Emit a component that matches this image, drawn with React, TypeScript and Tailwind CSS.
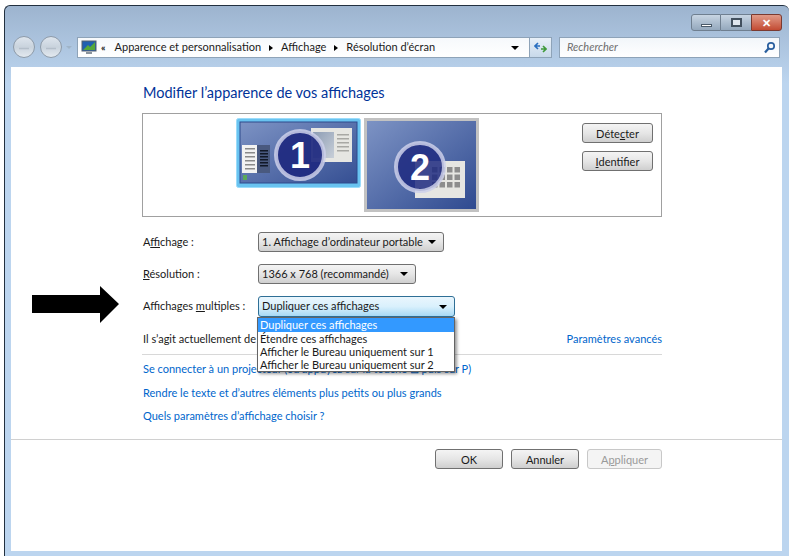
const btn =
  "h-[20px] rounded-[3px] border border-[#707070] bg-gradient-to-b from-[#f4f4f4] via-[#e6e6e6] to-[#cfcfcf] text-[11px] leading-none text-[#1a1a1a] flex items-center justify-center";
const select =
  "h-[20px] rounded-[3px] border border-[#707070] bg-gradient-to-b from-[#f4f4f4] via-[#e6e6e6] to-[#cfcfcf] text-[11px] flex items-center justify-between pl-[3px] pr-[7px] text-[#1a1a1a] whitespace-nowrap";

function Caret() {
  return <span className="block shrink-0 w-0 h-0 border-x-[4px] border-x-transparent border-t-[4px] border-t-black" />;
}

function NavCircle() {
  return (
    <svg width="22" height="22" viewBox="0 0 22 22" className="shrink-0">
      <defs>
        <linearGradient id="nav" x1="0" y1="0" x2="0" y2="1">
          <stop offset="0" stopColor="#dfe6ee" />
          <stop offset="0.5" stopColor="#c9d3dd" />
          <stop offset="1" stopColor="#e4eaf0" />
        </linearGradient>
      </defs>
      <circle cx="11" cy="11" r="10.5" fill="url(#nav)" stroke="#8d9aa8" />
      <path d="M6 12.5h10" stroke="#b4bfca" strokeWidth="1.5" />
    </svg>
  );
}

function Monitor1() {
  return (
    <svg width="125" height="70" viewBox="0 0 125 70" className="shrink-0">
      <defs>
        <linearGradient id="m1" x1="0" y1="0" x2="1" y2="1">
          <stop offset="0" stopColor="#7d93c4" />
          <stop offset="1" stopColor="#354f93" />
        </linearGradient>
        <linearGradient id="win1" x1="0" y1="0" x2="1" y2="1">
          <stop offset="0" stopColor="#8c9cb4" />
          <stop offset="1" stopColor="#c8cfd8" />
        </linearGradient>
      </defs>
      <rect x="0.5" y="0.5" width="124" height="69" rx="2" fill="#69c3f0" stroke="#9bdcfa" />
      <rect x="4" y="4" width="117" height="61" fill="url(#m1)" stroke="#2f4a8c" />
      <rect x="75" y="10" width="41" height="34" fill="#e6e6e2" />
      <rect x="77" y="14" width="21" height="26" fill="url(#win1)" />
      {[16, 20, 24, 28, 32].map((y) => (
        <rect key={y} x="101" y={y} width="12" height="1.5" fill="#a8a8a4" />
      ))}
      <rect x="6" y="27" width="15" height="28" fill="#f2f2f2" />
      <rect x="21" y="27" width="13" height="28" fill="#49597f" />
      {[30, 34, 38, 42, 46, 50].map((y) => (
        <rect key={y} x="9" y={y} width="10" height="1.5" fill="#8a8a8a" />
      ))}
      {[32, 35, 38, 41, 44, 47].map((y) => (
        <rect key={y} x="24" y={y} width="8" height="1.5" fill="#111827" />
      ))}
      <rect x="7" y="57" width="4" height="5" fill="#5aa85a" />
      <circle cx="64" cy="37" r="24" fill="#1f2a80" fillOpacity="0.93" stroke="#ccd0ea" strokeOpacity="0.85" strokeWidth="4" />
      <text x="64" y="50" textAnchor="middle" fontFamily="Liberation Sans, sans-serif" fontWeight="700" fontSize="36" fill="#fff">
        1
      </text>
    </svg>
  );
}

function Monitor2() {
  const cells = [0, 1, 2, 3];
  return (
    <svg width="115" height="94" viewBox="0 0 115 94" className="shrink-0 -ml-[1px]">
      <defs>
        <linearGradient id="m2" x1="0" y1="0" x2="1" y2="1">
          <stop offset="0" stopColor="#7d93c4" />
          <stop offset="1" stopColor="#2f4a90" />
        </linearGradient>
      </defs>
      <rect x="0" y="0" width="115" height="94" fill="#c2c2c2" />
      <rect x="3" y="3" width="109" height="88" fill="url(#m2)" />
      <rect x="51" y="43" width="50" height="37" fill="#e6e6e2" />
      {cells.map((c) =>
        [0, 1, 2].map((r) => (
          <rect key={`${c}-${r}`} x={68 + c * 7.5} y={49 + r * 7.5} width="5.5" height="5.5" fill="#8d8d8d" />
        )),
      )}
      <rect x="55" y="70" width="9" height="1.5" fill="#9a9a9a" />
      <circle cx="56" cy="49" r="24" fill="#1f2a80" fillOpacity="0.85" stroke="#ccd0ea" strokeOpacity="0.85" strokeWidth="4" />
      <text x="56" y="62" textAnchor="middle" fontFamily="Liberation Sans, sans-serif" fontWeight="700" fontSize="36" fill="#fff">
        2
      </text>
    </svg>
  );
}

export default function App() {
  return (
    <div className="w-[789px] h-[556px] bg-white pl-[4px] pt-[5px] overflow-hidden font-['Lato',sans-serif] text-[11px] text-[#1a1a1a]">
      <div className="relative w-[785px] h-[551px] rounded-t-[6px] border-l border-t border-[#22303f] bg-gradient-to-b from-[#9db4cf] from-0% to-[#bcd5ef] to-[14%] flex flex-col">
        {/* title bar */}
        <div className="h-[25px] flex justify-end items-start pt-[8px] pr-[7px]">
          <div className="flex h-[17px]">
            <div className="w-[30px] rounded-l-[3px] border border-[#6f7f90] bg-gradient-to-b from-[#c8d5e3] to-[#94a8bd] flex items-end justify-center pb-[3px]">
              <span className="w-[11px] h-[3px] bg-white border border-[#4a5a6a]" />
            </div>
            <div className="w-[30px] border-y border-[#6f7f90] bg-gradient-to-b from-[#c8d5e3] to-[#94a8bd] flex items-center justify-center">
              <span className="w-[11px] h-[9px] border-2 border-[#42505e] bg-[#dfe6ee]" />
            </div>
            <div className="w-[31px] rounded-r-[3px] border border-[#7a3a30] bg-gradient-to-b from-[#e09a88] to-[#c24a32] flex items-center justify-center text-white font-bold text-[11px] leading-none">
              ✕
            </div>
          </div>
        </div>

        {/* nav bar */}
        <div className="h-[36px] flex items-start pt-[5px] pl-[8px]">
          <NavCircle />
          <div className="w-[5px] shrink-0" />
          <NavCircle />
          <span className="ml-[4px] mt-[10px] shrink-0 w-0 h-0 border-x-[3px] border-x-transparent border-t-[3px] border-t-[#9fb4c8]" />
          <div className="ml-[5px] w-[453px] h-[21px] mt-[1px] border border-[#8ea3b8] bg-gradient-to-b from-[#f6f9fc] to-white flex items-center pl-[3px] pr-[10px] whitespace-nowrap">
            <svg width="16" height="16" viewBox="0 0 16 16" className="shrink-0">
              <rect x="1" y="1" width="14" height="10" fill="#1f5fb0" stroke="#56616c" />
              <path d="M2 10l5-5 2 2 5-5v8z" fill="#55a83a" />
              <rect x="5" y="12" width="6" height="2" fill="#8a939c" />
            </svg>
            <span className="ml-[4px] font-bold text-[10px]">«</span>
            <span className="ml-[9px]">Apparence et personnalisation</span>
            <span className="mx-[8px] w-0 h-0 border-y-[3.5px] border-y-transparent border-l-[4px] border-l-black" />
            <span>Affichage</span>
            <span className="mx-[8px] w-0 h-0 border-y-[3.5px] border-y-transparent border-l-[4px] border-l-black" />
            <span>Résolution d’écran</span>
            <span className="ml-auto"><Caret /></span>
          </div>
          <div className="w-[22px] h-[21px] mt-[1px] border-y border-r border-[#8ea3b8] bg-gradient-to-b from-[#e8f0f8] to-[#c8d9ea] flex items-center justify-center">
            <svg width="13" height="11" viewBox="0 0 13 11">
              <path d="M4 1L1 4l3 3M1 4h5" fill="none" stroke="#2a6fc0" strokeWidth="1.6" />
              <path d="M9 10l3-3-3-3M12 7H7" fill="none" stroke="#3f9a3a" strokeWidth="1.6" />
            </svg>
          </div>
          <div className="ml-[7px] w-[221px] h-[21px] mt-[1px] border border-[#8ea3b8] bg-gradient-to-b from-[#f2f6fa] to-white flex items-center justify-between pl-[7px] pr-[3px]">
            <span className="italic text-[#6d6d6d]">Rechercher</span>
            <svg width="13" height="13" viewBox="0 0 13 13">
              <circle cx="8" cy="5" r="3.2" fill="none" stroke="#2a5f9e" strokeWidth="1.7" />
              <path d="M5.5 7.5L2 11.5" stroke="#2a5f9e" strokeWidth="2.2" />
            </svg>
          </div>
        </div>

        {/* content */}
        <div className="ml-[6px] w-[771px] h-[484px] bg-white flex flex-col">
          <div className="h-[372px] pl-[131px] pr-[120px] flex flex-col">
            <h1 className="h-[46px] pl-[1px] pt-[15px] text-[14.5px] leading-[22px] text-[#003399] font-normal whitespace-nowrap">
              Modifier l’apparence de vos affichages
            </h1>
            <div className="h-[104px] w-[520px] border border-[#a0a0a0] flex items-start pt-[4px] pl-[93px]">
              <Monitor1 />
              <div className="w-[4px]" />
              <Monitor2 />
              <div className="ml-[103px] mt-[5px] flex flex-col gap-[8px]">
                <div className={`${btn} w-[71px] h-[19px]`}>
                  <span>Déte<u>c</u>ter</span>
                </div>
                <div className={`${btn} w-[71px]`}>
                  <span><u>I</u>dentifier</span>
                </div>
              </div>
            </div>

            <div className="mt-[15px] pl-[1px] h-[20px] flex items-center">
              <span className="w-[115px] shrink-0 whitespace-nowrap">A<u>f</u>fichage :</span>
              <div className={`${select} w-[186px]`}>
                <span>1. Affichage d’ordinateur portable</span>
                <Caret />
              </div>
            </div>
            <div className="mt-[12px] pl-[1px] h-[20px] flex items-center">
              <span className="w-[115px] shrink-0 whitespace-nowrap"><u>R</u>ésolution :</span>
              <div className={`${select} w-[158px]`}>
                <span>1366 x 768 (recommandé)</span>
                <Caret />
              </div>
            </div>
            <div className="relative mt-[12px] pl-[1px] h-[21px] flex items-center">
              <span className="w-[115px] shrink-0 whitespace-nowrap">Affichages <u>m</u>ultiples :</span>
              <div className="w-[197px] h-[21px] rounded-[3px] border border-[#2f6f96] bg-gradient-to-b from-[#eaf6fd] via-[#d9f0fc] to-[#a7d9f5] flex items-center justify-between pl-[3px] pr-[7px]">
                <span>Dupliquer ces affichages</span>
                <Caret />
              </div>
              {/* open list */}
              <div className="absolute z-10 left-[115px] top-[21px] w-[198px] h-[55px] bg-white border border-[#646464] shadow-[2px_2px_3px_rgba(0,0,0,0.4)] flex flex-col leading-[13.5px] whitespace-nowrap">
                <div className="h-[14px] pl-[2px] bg-[#3399ff] text-white">Dupliquer ces affichages</div>
                <div className="h-[13px] pl-[2px]">Étendre ces affichages</div>
                <div className="h-[13px] pl-[2px]">Afficher le Bureau uniquement sur 1</div>
                <div className="h-[13px] pl-[2px]">Afficher le Bureau uniquement sur 2</div>
              </div>
            </div>

            <div className="mt-[14px] pl-[1px] h-[16px] w-[520px] flex items-center justify-between whitespace-nowrap">
              <span>Il s’agit actuellement de votre affichage principal.</span>
              <span className="text-[#0066cc]">Paramètres avancés</span>
            </div>
            <div className="mt-[7px] w-[520px] border-t border-[#d8d8d8]" />
            <div className="mt-[6px] pl-[1px] h-[16px] leading-[16px] text-[#0066cc] whitespace-nowrap">
              Se connecter à un projecteur (ou appuyez sur la touche ⊞ puis sur P)
            </div>
            <div className="mt-[8px] pl-[1px] h-[16px] leading-[16px] text-[#0066cc] whitespace-nowrap">
              Rendre le texte et d’autres éléments plus petits ou plus grands
            </div>
            <div className="mt-[7px] pl-[1px] h-[16px] leading-[16px] text-[#0066cc] whitespace-nowrap">
              Quels paramètres d’affichage choisir ?
            </div>
          </div>
          <div className="border-t border-[#d0d0d0]" />
          <div className="mt-[9px] flex justify-end pr-[120px] gap-[8px]">
            <div className={`${btn} w-[68px]`}>OK</div>
            <div className={`${btn} w-[68px]`}>Annuler</div>
            <div className="h-[20px] w-[75px] rounded-[3px] border border-[#c8c8c8] bg-[#f4f4f4] text-[#9a9a9a] flex items-center justify-center leading-none">
              <span>A<u>p</u>pliquer</span>
            </div>
          </div>
        </div>

        {/* annotation arrow */}
        <svg width="90" height="38" viewBox="0 0 90 38" className="absolute left-[26px] top-[280px]">
          <path d="M1 9h68V0l19 18-19 19V27H1z" fill="#000" />
        </svg>
      </div>
    </div>
  );
}
